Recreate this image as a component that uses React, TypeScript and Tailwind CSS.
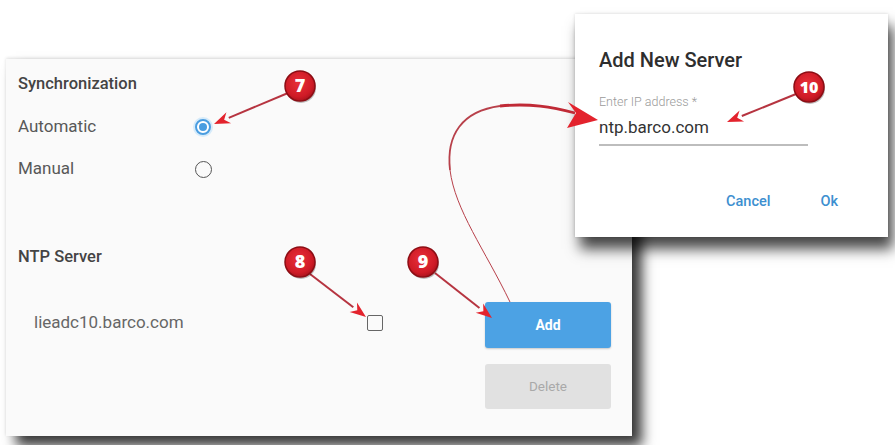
import React from "react";

function Radio({ checked }: { checked: boolean }) {
  return checked ? (
    <span className="flex h-[20px] w-[20px] items-center justify-center rounded-full bg-[#d6ebfa]">
      <span className="flex h-[16px] w-[16px] items-center justify-center rounded-full border-2 border-[#4a9de0] bg-white">
        <span className="h-[8px] w-[8px] rounded-full bg-[#4a9de0]" />
      </span>
    </span>
  ) : (
    <span className="flex h-[20px] w-[20px] items-center justify-center">
      <span className="h-[17px] w-[17px] rounded-full border-[1.5px] border-[#555]" />
    </span>
  );
}

function Badge({ x, y, n }: { x: number; y: number; n: string }) {
  return (
    <g>
      <circle cx={x + 1} cy={y + 2} r={15} fill="rgba(0,0,0,0.25)" />
      <circle cx={x} cy={y} r={15} fill="url(#badge)" stroke="#8c0d14" strokeWidth={1.5} />
      <text
        x={x}
        y={y + 6}
        textAnchor="middle"
        fontFamily="'Open Sans', Arial, sans-serif"
        fontWeight={800}
        fontSize={n.length > 1 ? 16 : 18}
        fill="#fff"
      >
        {n}
      </text>
    </g>
  );
}

function Arrow({ x1, y1, x2, y2 }: { x1: number; y1: number; x2: number; y2: number }) {
  const dx = x2 - x1;
  const dy = y2 - y1;
  const len = Math.hypot(dx, dy);
  const ux = dx / len;
  const uy = dy / len;
  const head = 16;
  const bx = x2 - ux * head;
  const by = y2 - uy * head;
  const px = -uy * 6;
  const py = ux * 6;
  const nx = x2 - ux * (head - 5);
  const ny = y2 - uy * (head - 5);
  return (
    <g>
      <line x1={x1} y1={y1} x2={bx} y2={by} stroke="#b63440" strokeWidth={2} />
      <polygon
        points={`${x2},${y2} ${bx + px},${by + py} ${nx},${ny} ${bx - px},${by - py}`}
        fill="#e3232d"
      />
    </g>
  );
}

export default function App() {
  return (
    <div
      className="relative h-[445px] w-[895px] overflow-hidden bg-white text-[#4a4a4a]"
      style={{ fontFamily: "Roboto, 'Noto Sans', Arial, sans-serif" }}
    >
      {/* Settings panel */}
      <div className="ml-[6px] mt-[59px] h-[377px] w-[626px] bg-[#fafafa] pl-[12px] pt-[15px] shadow-[10px_10px_12px_rgba(0,0,0,0.78),0_-1px_3px_rgba(0,0,0,0.12)]">
        <div className="h-[20px] text-[16.5px] font-medium leading-[20px] text-[#444]">
          Synchronization
        </div>
        <div className="mt-[21px] flex h-[24px] items-center text-[17px] text-[#585858]">
          <span className="w-[175px]">Automatic</span>
          <Radio checked />
        </div>
        <div className="mt-[18px] flex h-[24px] items-center text-[17px] text-[#585858]">
          <span className="w-[175px]">Manual</span>
          <Radio checked={false} />
        </div>
        <div className="mt-[66px] h-[20px] text-[16.5px] font-medium leading-[20px] text-[#444]">
          NTP Server
        </div>
        <div className="mt-[35px] flex">
          <div className="mt-[11px] flex h-[20px] w-[467px] items-center pl-[16px]">
            <span className="w-[333px] text-[17px] text-[#666]">lieadc10.barco.com</span>
            <span className="h-[16px] w-[16px] rounded-[2px] border-[1.5px] border-[#666]" />
          </div>
          <div className="flex flex-col gap-[16px]">
            <div className="flex h-[46px] w-[126px] items-center justify-center rounded-[3px] bg-[#4ca2e4] text-[14px] font-bold text-white shadow-[0_1px_2px_rgba(0,0,0,0.2)]">
              Add
            </div>
            <div className="flex h-[45px] w-[126px] items-center justify-center rounded-[3px] bg-[#e1e1e1] text-[13.5px] text-[#a9a9a9]">
              Delete
            </div>
          </div>
        </div>
      </div>

      {/* Add server dialog */}
      <div className="absolute left-[575px] top-[14px] flex h-[223px] w-[313px] flex-col bg-white px-[24px] shadow-[5px_12px_13px_rgba(0,0,0,0.72),0_0_3px_rgba(0,0,0,0.15)]">
        <div className="mt-[34px] h-[24px] text-[20px] font-medium leading-[24px] text-[#2e2e2e]">
          Add New Server
        </div>
        <div className="mt-[23px] h-[14px] text-[12.5px] font-light leading-[14px] text-[#9a9a9a]">
          Enter IP address *
        </div>
        <div className="mt-[8px] h-[20px] w-[209px] text-[17px] leading-[20px] text-[#333]">
          ntp.barco.com
        </div>
        <div className="mt-[7px] h-[1.5px] w-[209px] bg-[#bdbdbd]" />
        <div className="mt-[47px] flex h-[18px] items-center justify-end gap-[50px] pr-[26px] text-[14.5px] font-medium leading-[18px] text-[#3d8fd0]">
          <span>Cancel</span>
          <span>Ok</span>
        </div>
      </div>

      {/* Callouts */}
      <svg className="pointer-events-none absolute left-0 top-0" width={895} height={445} viewBox="0 0 895 445">
        <defs>
          <radialGradient id="badge" cx="0.45" cy="0.4" r="0.65">
            <stop offset="0" stopColor="#e8303a" />
            <stop offset="0.7" stopColor="#cf1b26" />
            <stop offset="1" stopColor="#a3111b" />
          </radialGradient>
        </defs>

        <Arrow x1={288} y1={93} x2={214} y2={124} />
        <Arrow x1={310} y1={274} x2={366} y2={317} />
        <Arrow x1={435} y1={273} x2={492} y2={318} />
        <Arrow x1={796} y1={94} x2={727} y2={122} />

        {/* curved arrow from the Add button to the dialog field */}
        <path d="M510,302 C485,250 455,210 450,170" fill="none" stroke="#b8404a" strokeWidth={1} />
        <path d="M450,170 C446,135 462,111 500,106" fill="none" stroke="#b8404a" strokeWidth={1.8} />
        <path d="M500,106 C530,103 552,107 575,113" fill="none" stroke="#c02a36" strokeWidth={2.8} />
        <polygon points="598,120 568,102 576,113 567,128" fill="#e3232d" />

        <Badge x={300} y={86} n="7" />
        <Badge x={300} y={262} n="8" />
        <Badge x={423} y={262} n="9" />
        <Badge x={809} y={87} n="10" />
      </svg>
    </div>
  );
}
